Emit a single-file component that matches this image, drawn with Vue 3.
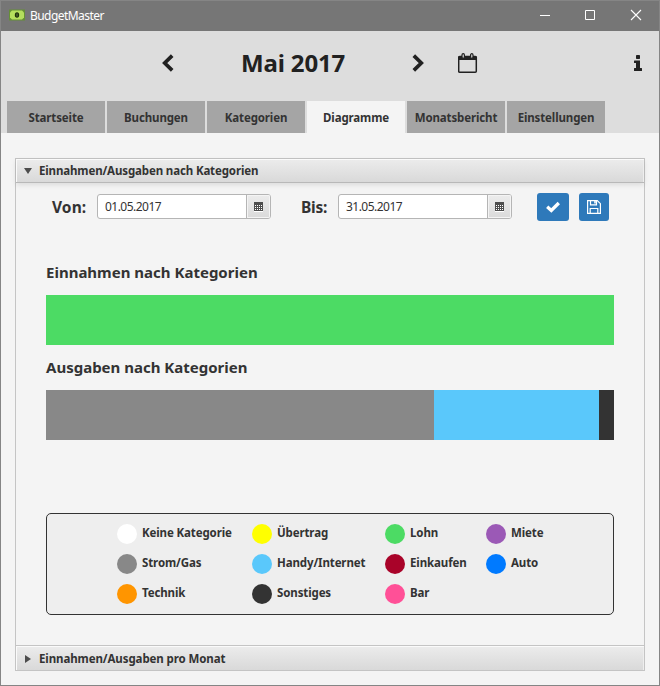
<script setup>
const tabs = ['Startseite', 'Buchungen', 'Kategorien', 'Diagramme', 'Monatsbericht', 'Einstellungen']
const activeTab = 'Diagramme'

const dates = [
  { label: 'Von:', value: '01.05.2017' },
  { label: 'Bis:', value: '31.05.2017' },
]

const charts = [
  { title: 'Einnahmen nach Kategorien', parts: [{ color: '#4cdb64', size: 568 }] },
  {
    title: 'Ausgaben nach Kategorien',
    parts: [
      { color: '#888888', size: 388 },
      { color: '#5ac8fb', size: 165 },
      { color: '#333333', size: 15 },
    ],
  },
]

const legend = [
  { name: 'Keine Kategorie', color: '#ffffff' },
  { name: 'Übertrag', color: '#ffff00' },
  { name: 'Lohn', color: '#4cdb64' },
  { name: 'Miete', color: '#9b59b6' },
  { name: 'Strom/Gas', color: '#888888' },
  { name: 'Handy/Internet', color: '#5ac8fb' },
  { name: 'Einkaufen', color: '#a90329' },
  { name: 'Auto', color: '#007aff' },
  { name: 'Technik', color: '#ff9500' },
  { name: 'Sonstiges', color: '#333333' },
  { name: 'Bar', color: '#ff5097' },
]
</script>

<template>
  <div class="window">
    <header class="titlebar">
      <svg class="app-icon" width="16" height="12" viewBox="0 0 16 12">
        <rect width="16" height="11" y=".5" fill="#658f36" />
        <path d="M3 1.500h10l2 2v5l-2 2H3l-2-2v-5z" fill="#b5df5d" />
        <ellipse cx="8" cy="6" rx="2.200" ry="2.800" fill="#20300d" />
        <path d="M8 4.500v3" stroke="#5f813a" stroke-width="1" />
      </svg>
      <span class="app-name">BudgetMaster</span>
      <svg class="controls" width="102" height="12" viewBox="0 0 102 12" fill="none" stroke="#fff">
        <path d="M0 6.5h10M45.5 1.5h9v9h-9z" />
        <path d="M91 1l10 10M101 1l-10 10" stroke-width="1.1" />
      </svg>
    </header>

    <section class="month-bar">
      <svg class="prev" width="12" height="18" viewBox="0 0 12 18">
        <path d="M10.200 1.600 2.700 9l7.500 7.400" fill="none" stroke="#212121" stroke-width="3.700" />
      </svg>
      <h1 class="month">Mai 2017</h1>
      <svg class="next" width="12" height="18" viewBox="0 0 12 18">
        <path d="M1.800 1.600 9.300 9l-7.500 7.400" fill="none" stroke="#212121" stroke-width="3.700" />
      </svg>
      <svg class="calendar" width="20" height="21" viewBox="0 0 20 21">
        <path d="M1.700 3.500h15.600a1 1 0 0 1 1 1v13.700a1 1 0 0 1-1 1H1.700a1 1 0 0 1-1-1V4.500a1 1 0 0 1 1-1z" fill="none" stroke="#212121" stroke-width="1.500" />
        <path d="M0 4.500Q0 3 1.500 3h16Q19 3 19 4.500V7H0z" fill="#212121" />
        <rect x="4" y=".7" width="2.400" height="4.600" rx="1.200" fill="#ddd" stroke="#212121" stroke-width="1.200" />
        <rect x="12.600" y=".7" width="2.400" height="4.600" rx="1.200" fill="#ddd" stroke="#212121" stroke-width="1.200" />
      </svg>
      <svg class="info" width="8" height="16" viewBox="0 0 8 16" fill="#212121">
        <rect x="2" y="0" width="4" height="4" rx=".7" />
        <path d="M.5 5.500H6V13h1.500q.5 0 .5.5V15.500q0 .5-.5.5H.5q-.5 0-.5-.5V13.500Q0 13 .5 13H2V8H.5Q0 8 0 7.500V6q0-.5.5-.5z" />
      </svg>
    </section>

    <nav class="tabs">
      <div v-for="tab in tabs" :key="tab" class="tab" :class="{ active: tab === activeTab }">
        <span>{{ tab }}</span>
      </div>
    </nav>

    <main class="accordion">
      <div class="pane-title">
        <svg width="8" height="6" viewBox="0 0 8 6"><path d="M0 0h8L4 6z" fill="#4d4d4d" /></svg>
        <span>Einnahmen/Ausgaben nach Kategorien</span>
      </div>
      <div class="pane">
        <div class="filters">
          <template v-for="date in dates" :key="date.label">
            <label class="date-label">{{ date.label }}</label>
            <div class="date-field">
              <span class="date-value">{{ date.value }}</span>
              <span class="date-button">
                <svg width="9" height="10" viewBox="0 0 9 10" shape-rendering="crispEdges">
                  <path d="M0 9h9v1H0z" fill="#fff" />
                  <path d="M0 0h9v9H0z" fill="#4d4d4d" />
                  <path d="M1 3.500h7M1 5.500h7M1 7.500h7" stroke="#fff" stroke-dasharray="1 1" />
                </svg>
              </span>
            </div>
          </template>
          <button class="action confirm">
            <svg width="14" height="12" viewBox="0 0 14 12"><path d="M1.200 5.800 5.300 9.500 12.800 2" fill="none" stroke="#fff" stroke-width="3.300" /></svg>
          </button>
          <button class="action save">
            <svg width="14" height="14" viewBox="0 0 14 14" fill="none" stroke="#fff" stroke-width="1.200">
              <path d="M.6.6h9.700l3.100 3.100v9.700H.6z" />
              <path d="M3.500.6v4.300h6V.6M3.200 13.400V8.500h7.600v4.900" />
              <path d="M7.200.8h1.600v2.700H7.200z" fill="#fff" stroke="none" />
            </svg>
          </button>
        </div>

        <section v-for="chart in charts" :key="chart.title" class="chart">
          <h2>{{ chart.title }}</h2>
          <div class="bar">
            <div v-for="part in chart.parts" :key="part.color" :style="{ flex: part.size, background: part.color }"></div>
          </div>
        </section>

        <div class="legend">
          <div v-for="item in legend" :key="item.name" class="entry">
            <i class="dot" :style="{ background: item.color }"></i>
            <span>{{ item.name }}</span>
          </div>
        </div>
      </div>
      <div class="pane-title last">
        <svg width="6" height="8" viewBox="0 0 6 8"><path d="M0 0v8l6-4z" fill="#4d4d4d" /></svg>
        <span>Einnahmen/Ausgaben pro Monat</span>
      </div>
    </main>
  </div>
</template>

<style>
body { margin: 0; }
</style>

<style scoped>
* { box-sizing: border-box; }
svg { display: block; flex: none; }
span, h1, h2, label { white-space: nowrap; }
.window {
  width: 660px; height: 686px; border: 1px solid #858585;
  background: #f4f4f4; color: #333; overflow: hidden;
  font: 700 11.5px/16px "Noto Sans", "Open Sans", sans-serif;
  display: flex; flex-direction: column;
}
.titlebar {
  height: 30px; flex: none; background: #767676; color: #fff;
  display: flex; align-items: center; padding: 0 17px 2px 8px;
}
.app-name { margin-left: 5px; font-weight: 400; font-size: 12px; letter-spacing: -.55px; padding-top: 1px; }
.controls { margin-left: auto; }
.month-bar { height: 70px; flex: none; background: #ddd; display: flex; align-items: center; padding: 0 17px 6px 161px; }
.month { margin: 0 0 0 67px; width: 106px; font-size: 24px; line-height: 32px; color: #212121; letter-spacing: -.15px; }
.next { margin-left: 65px; }
.calendar { margin-left: 34px; }
.info { margin-left: auto; }
.tabs { height: 32px; flex: none; background: #ddd; display: flex; gap: 2px; padding-left: 6px; }
.tab {
  width: 98px; background: #a5a5a5; display: flex; align-items: center; justify-content: center;
  letter-spacing: -.13px; padding-top: 2px;
}
.tab.active { background: #f4f4f4; }
.accordion { margin: 25px 14px 0; height: 513px; border: 1px solid #c4c4c4; display: flex; flex-direction: column; }
.pane-title {
  height: 24px; flex: none; display: flex; align-items: center; gap: 7px; padding: 0 8px;
  background: linear-gradient(#ececec, #d9d9d9); border-bottom: 1px solid #b8b8b8;
  box-shadow: inset 1px 1px #fafafa, inset -1px 0 #eee, 0 2px 5px rgba(0, 0, 0, .1);
  letter-spacing: -.14px;
}
.pane-title.last { height: 25px; border-top: 1px solid #c4c4c4; border-bottom: 0; padding: 2px 8px 0 9px; gap: 8px; letter-spacing: -.1px; box-shadow: inset 1px 1px #fafafa, inset -1px 0 #eee; }
.pane { flex: 1; padding: 10px 30px 0; }
.filters { height: 28px; display: flex; align-items: center; padding-left: 6px; }
.date-label { width: 45px; font-size: 15.5px; line-height: 22px; letter-spacing: .1px; }
.date-field + .date-label { margin-left: 30px; width: 37px; letter-spacing: -.2px; }
.date-field {
  width: 174px; height: 25px; margin-bottom: 1px; border: 1px solid #b5b5b5; border-radius: 3px;
  background: #fff; display: flex; overflow: hidden;
}
.date-value { flex: 1; padding: 4px 7px; font-size: 12px; font-weight: 400; letter-spacing: -.53px; line-height: 16px; }
.date-button {
  width: 24px; border-left: 1px solid #b5b5b5; background: linear-gradient(#ececec, #dadada);
  box-shadow: inset 0 0 0 1px #f4f4f4; display: flex; align-items: center; justify-content: center;
}
.date-button svg { margin-right: 1px; }
.action { height: 28px; padding: 0; border: 0; border-radius: 3px; background: #2e79ba; display: flex; align-items: center; justify-content: center; }
.confirm { width: 32px; margin-left: 25px; }
.save { width: 30px; margin-left: 10px; }
.chart h2 { margin: 0; height: 45px; padding-top: 11px; font-size: 15px; line-height: 22px; letter-spacing: 0; }
.filters + .chart { margin-top: 29px; }
.bar { height: 50px; display: flex; }
.legend {
  margin-top: 73px; height: 102px; border: 1px solid #333; border-radius: 5px; background: #eee;
  display: grid; grid-template-columns: 135px 133px 101px 80px; grid-auto-rows: 30px;
  padding: 5px 0 0 70px; letter-spacing: -.12px;
}
.entry { display: flex; align-items: center; gap: 5px; }
.entry span { padding-bottom: 2px; }
.dot { width: 20px; height: 20px; border-radius: 50%; flex: none; }
</style>
